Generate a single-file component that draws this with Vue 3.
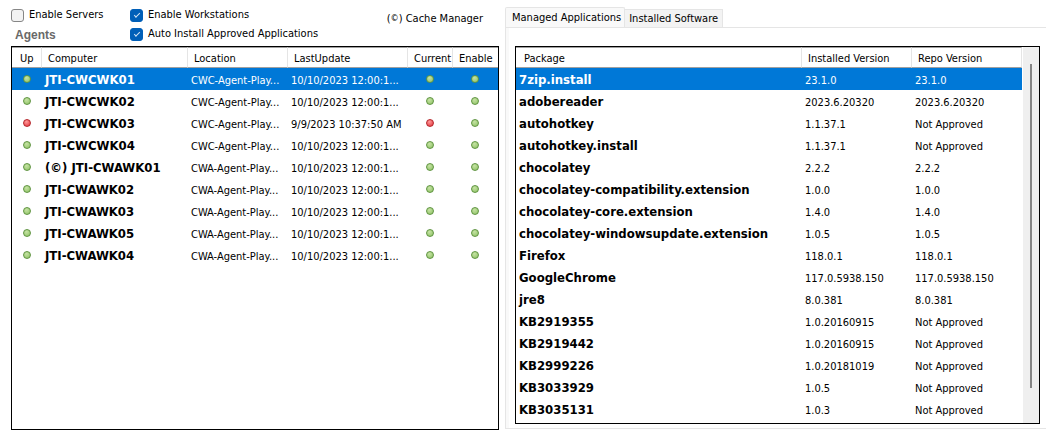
<script setup>
import { ref } from 'vue'

const enableServers = ref(false)
const enableWorkstations = ref(true)
const autoInstall = ref(true)
const selectedAgent = ref(0)
const selectedPackage = ref(0)

const noon = '10/10/2023 12:00:1...'
const cwc = 'CWC-Agent-Play...'
const cwa = 'CWA-Agent-Play...'

const agents = [
  { name: 'JTI-CWCWK01', location: cwc, updated: noon, ok: true },
  { name: 'JTI-CWCWK02', location: cwc, updated: noon, ok: true },
  { name: 'JTI-CWCWK03', location: cwc, updated: '9/9/2023 10:37:50 AM', ok: false },
  { name: 'JTI-CWCWK04', location: cwc, updated: noon, ok: true },
  { name: '(©) JTI-CWAWK01', location: cwa, updated: noon, ok: true },
  { name: 'JTI-CWAWK02', location: cwa, updated: noon, ok: true },
  { name: 'JTI-CWAWK03', location: cwa, updated: noon, ok: true },
  { name: 'JTI-CWAWK05', location: cwa, updated: noon, ok: true },
  { name: 'JTI-CWAWK04', location: cwa, updated: noon, ok: true },
]

const none = 'Not Approved'
const packages = [
  ['7zip.install', '23.1.0', '23.1.0'],
  ['adobereader', '2023.6.20320', '2023.6.20320'],
  ['autohotkey', '1.1.37.1', none],
  ['autohotkey.install', '1.1.37.1', none],
  ['chocolatey', '2.2.2', '2.2.2'],
  ['chocolatey-compatibility.extension', '1.0.0', '1.0.0'],
  ['chocolatey-core.extension', '1.4.0', '1.4.0'],
  ['chocolatey-windowsupdate.extension', '1.0.5', '1.0.5'],
  ['Firefox', '118.0.1', '118.0.1'],
  ['GoogleChrome', '117.0.5938.150', '117.0.5938.150'],
  ['jre8', '8.0.381', '8.0.381'],
  ['KB2919355', '1.0.20160915', none],
  ['KB2919442', '1.0.20160915', none],
  ['KB2999226', '1.0.20181019', none],
  ['KB3033929', '1.0.5', none],
  ['KB3035131', '1.0.3', none],
]
</script>

<template>
  <main class="window">
    <section class="agents">
      <div class="options">
        <div class="col-left">
          <label class="check"><input v-model="enableServers" type="checkbox" />Enable Servers</label>
          <h2>Agents</h2>
        </div>
        <div class="col-mid">
          <label class="check"><input v-model="enableWorkstations" type="checkbox" />Enable Workstations</label>
          <label class="check"><input v-model="autoInstall" type="checkbox" />Auto Install Approved Applications</label>
        </div>
        <p class="legend"><span>(<small>©</small>)</span> Cache Manager</p>
      </div>
      <div class="list">
        <table>
          <colgroup>
            <col class="w-up" /><col /><col class="w-location" /><col class="w-updated" /><col class="w-flag" /><col class="w-flag" />
          </colgroup>
          <thead>
            <tr><th>Up</th><th>Computer</th><th>Location</th><th>LastUpdate</th><th>Current</th><th>Enable</th></tr>
          </thead>
          <tbody>
            <tr v-for="(a, i) in agents" :key="a.name" :class="{ selected: i === selectedAgent }" @click="selectedAgent = i">
              <td class="state"><i class="dot" :class="{ down: !a.ok }"></i></td>
              <td class="name">{{ a.name }}</td>
              <td>{{ a.location }}</td>
              <td>{{ a.updated }}</td>
              <td class="state flag"><i class="dot" :class="{ down: !a.ok }"></i></td>
              <td class="state flag"><i class="dot"></i></td>
            </tr>
          </tbody>
        </table>
      </div>
    </section>

    <section class="apps">
      <div class="tabs" role="tablist">
        <button class="tab active" role="tab" aria-selected="true">Managed Applications</button>
        <button class="tab" role="tab" aria-selected="false">Installed Software</button>
      </div>
      <div class="panel">
        <div class="list">
          <table>
            <colgroup>
              <col /><col class="w-version" /><col class="w-version" />
            </colgroup>
            <thead>
              <tr><th>Package</th><th>Installed Version</th><th>Repo Version</th></tr>
            </thead>
            <tbody>
              <tr v-for="(p, i) in packages" :key="p[0]" :class="{ selected: i === selectedPackage }" @click="selectedPackage = i">
                <td class="name">{{ p[0] }}</td>
                <td>{{ p[1] }}</td>
                <td>{{ p[2] }}</td>
              </tr>
            </tbody>
          </table>
          <div class="scrollbar"><div class="thumb"></div></div>
        </div>
      </div>
    </section>
  </main>
</template>

<style>
body {
  margin: 0;
  background: #fff;
}
</style>

<style scoped>
.window {
  box-sizing: border-box;
  display: grid;
  grid-template-columns: 488fr 541fr;
  gap: 6px;
  min-height: 100vh;
  padding: 7px 2px 7px 11px;
  color: #000;
  font: 11px/14px Tahoma, "DejaVu Sans Condensed", sans-serif;
}
.agents,
.apps {
  display: flex;
  flex-direction: column;
  min-width: 0;
}
.options {
  display: flex;
  height: 39px;
}
.col-left {
  width: 119px;
}
.col-mid {
  flex: 1;
}
.check {
  display: flex;
  align-items: center;
  gap: 5px;
  height: 16px;
  margin-bottom: 3px;
  white-space: nowrap;
}
.check input {
  appearance: none;
  box-sizing: border-box;
  width: 13px;
  height: 13px;
  margin: 0;
  border: 1px solid #868686;
  border-radius: 3px;
  background: #f3f3f3;
}
.check input:checked {
  display: grid;
  place-items: center;
  border-color: #005fb8;
  background: #005fb8;
}
.check input:checked::before {
  content: "";
  width: 5px;
  height: 2px;
  margin-bottom: 2px;
  border: solid #d5e5f4;
  border-width: 0 0 1px 1px;
  transform: rotate(-45deg);
}
h2 {
  margin: 0 4px;
  color: #696969;
  font: bold 12px/18px "Liberation Sans", Arial, sans-serif;
}
.legend {
  margin: 5px 16px 0 0;
  white-space: nowrap;
}
.legend small {
  font-size: 9px;
  line-height: 9px;
  vertical-align: 1px;
}
.list {
  display: flex;
  flex: 1;
  align-items: flex-start;
  border: 1px solid #000;
  background: #fff;
}
table {
  flex: 1;
  width: 100%;
  min-width: 0;
  table-layout: fixed;
  border-collapse: separate;
  border-spacing: 0;
}
.w-up { width: 30px; }
.w-location { width: 100px; }
.w-updated { width: 120px; }
.w-flag { width: 45px; }
.w-version { width: 110px; }
th {
  box-sizing: border-box;
  height: 21px;
  padding: 2px 0 0 6px;
  border-top: 1px solid #a0a0a0;
  border-right: 1px solid #e5e5e5;
  border-bottom: 1px solid #a0a0a0;
  font-weight: normal;
  text-align: left;
  white-space: nowrap;
}
th:first-child {
  padding-left: 8px;
}
.agents th:last-child {
  border-right: 0;
}
td {
  box-sizing: border-box;
  height: 22px;
  padding: 4px 0 0 3px;
  overflow: hidden;
  white-space: nowrap;
}
.name {
  padding-top: 2px;
  font-weight: bold;
  font-size: 13px;
}
.state {
  padding: 0;
}
.flag {
  padding-right: 2px;
}
.dot {
  box-sizing: border-box;
  display: block;
  width: 8px;
  height: 8px;
  margin: 0 auto;
  border: 1px solid #5f9440;
  border-radius: 50%;
  background: radial-gradient(circle at 40% 30%, #c6e3a4, #8cc163);
}
.dot.down {
  border-color: #b5262b;
  background: radial-gradient(circle at 40% 30%, #ff9a9a, #e03038);
}
.selected {
  background: #0078d7;
  color: #fff;
}
.tabs {
  display: flex;
  align-items: flex-end;
  height: 20px;
}
.tab {
  box-sizing: border-box;
  height: 18px;
  margin: 0;
  padding: 1px 4px 0;
  border: 1px solid #e5e5e5;
  border-width: 1px 1px 0 0;
  background: #f3f3f3;
  color: inherit;
  font: inherit;
  white-space: nowrap;
}
.tab.active {
  height: 20px;
  padding: 0 3px 0 6px;
  border-left-width: 1px;
  border-radius: 2px 2px 0 0;
  background: #f9f9f9;
}
.panel {
  display: flex;
  flex: 1;
  margin-bottom: 1px;
  border: 1px solid #e5e5e5;
  border-right: 0;
  background: linear-gradient(90deg, #f9f9f9 3px, #fff 3px);
}
.panel .list {
  margin: 18px 6px 4px 9px;
}
.scrollbar {
  box-sizing: border-box;
  align-self: stretch;
  width: 16px;
  margin-left: 1px;
  padding: 17px 7px 35px;
  background: #efefef;
}
.thumb {
  height: 100%;
  background: #858585;
}
</style>
